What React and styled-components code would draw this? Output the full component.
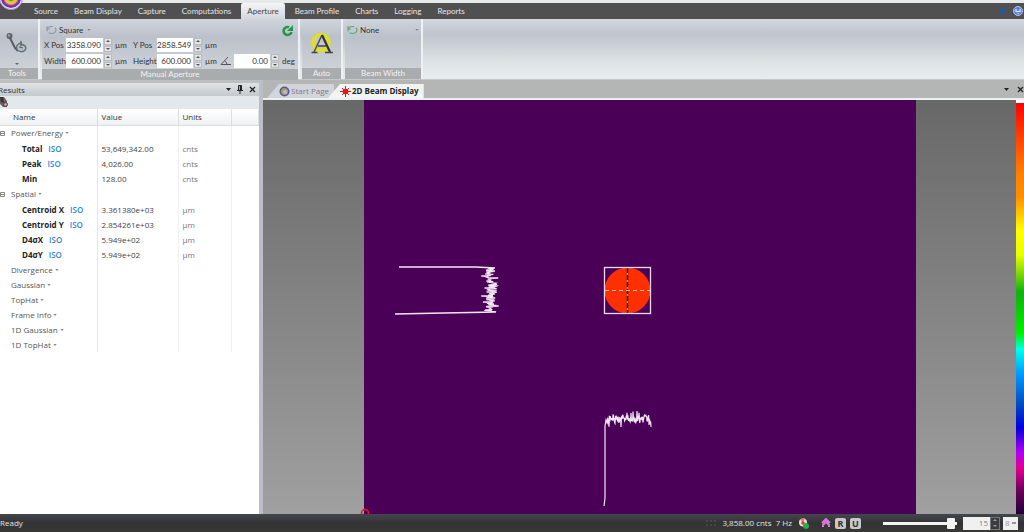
import React, { useState } from "react";
import styled, { createGlobalStyle } from "styled-components";

const TABS = [
  "Source",
  "Beam Display",
  "Capture",
  "Computations",
  "Aperture",
  "Beam Profile",
  "Charts",
  "Logging",
  "Reports",
];

const RESULTS = [
  {
    name: "Power/Energy",
    rows: [
      { name: "Total", iso: true, value: "53,649,342.00", units: "cnts" },
      { name: "Peak", iso: true, value: "4,026.00", units: "cnts" },
      { name: "Min", value: "128.00", units: "cnts" },
    ],
  },
  {
    name: "Spatial",
    rows: [
      { name: "Centroid X", iso: true, value: "3.361380e+03", units: "µm" },
      { name: "Centroid Y", iso: true, value: "2.854261e+03", units: "µm" },
      { name: "D4σX", iso: true, value: "5.949e+02", units: "µm" },
      { name: "D4σY", iso: true, value: "5.949e+02", units: "µm" },
    ],
  },
  { name: "Divergence" },
  { name: "Gaussian" },
  { name: "TopHat" },
  { name: "Frame Info" },
  { name: "1D Gaussian" },
  { name: "1D TopHat" },
];

// repeatable noise in the range -1..1
const noise = (i) => {
  const n = Math.sin(i * 12.9898 + 4.1) * 43758.5453;
  return (n - Math.floor(n)) * 2 - 1;
};

const verticalTrace = () => {
  const points = ["35,167", "112,167", "131,168"];
  for (let i = 0; i < 110; i++) {
    // widest around the middle of the beam
    const middle = Math.abs(i - 48) < 14 ? 2 : 0;
    const reach = i % 5 === 0 ? 9 : 5;
    points.push(`${(126 + middle + noise(i) * reach).toFixed(1)},${(168 + i * 0.4).toFixed(1)}`);
  }
  points.push("132,212", "80,213", "31,214");
  return points.join(" ");
};

const horizontalTrace = () => {
  const points = ["240,406", "241,398", "241,326", "242,320"];
  for (let i = 0; i < 110; i++) {
    const reach = i % 5 === 0 ? 8 : 4;
    points.push(`${(243 + i * 0.4).toFixed(1)},${(319 + noise(i + 90) * reach).toFixed(1)}`);
  }
  points.push("287,327");
  return points.join(" ");
};

const NumberField = ({ id, label, icon, value, unit }) => {
  const [text, setText] = useState(value);
  const step = (by) => setText((parseFloat(text) + by).toFixed(value.split(".")[1].length));

  return (
    <>
      <FieldLabel htmlFor={id} aria-label={label}>
        {icon || label}
      </FieldLabel>
      <FieldInput id={id} value={text} onChange={(e) => setText(e.target.value)} />
      <Spinner>
        <SpinButton aria-label={`Increase ${label}`} onClick={() => step(1)}>
          <SpinArrow up />
        </SpinButton>
        <SpinButton aria-label={`Decrease ${label}`} onClick={() => step(-1)}>
          <SpinArrow />
        </SpinButton>
      </Spinner>
      <Unit>{unit}</Unit>
    </>
  );
};

const Arrow = () => (
  <svg width="5" height="3" viewBox="0 0 5 3" aria-hidden="true">
    <path d="M0 0 2.5 3 5 0z" fill="currentColor" />
  </svg>
);

const SpinArrow = ({ up }) => (
  <svg width="4" height="2" viewBox="0 0 4 2" aria-hidden="true">
    <path d={up ? "M0 2 2 0 4 2z" : "M0 0 2 2 4 0z"} fill="currentColor" />
  </svg>
);

const CloseIcon = () => (
  <svg width="7" height="7" viewBox="0 0 7 7" aria-hidden="true">
    <path d="M1 1l5 5M6 1L1 6" stroke="#222" strokeWidth="1.3" />
  </svg>
);

const AngleIcon = () => (
  <svg width="11" height="10" viewBox="0 0 11 10" aria-hidden="true">
    <path d="M8 1 1 8.500h10M4.500 5q2.500 1 2.500 3.500" fill="none" stroke="#555" />
  </svg>
);

const ToolsIcon = () => (
  <svg width="22" height="22" viewBox="0 0 22 22" aria-hidden="true">
    <circle cx="3.500" cy="4" r="3" fill="#5d646b" />
    <circle cx="3" cy="3.500" r="1.200" fill="#9aa2aa" />
    <path d="M4 6l5 10 3 3" fill="none" stroke="#555c63" strokeWidth="2" />
    <path d="M12 18.500q-3-3 0-6l3-2v3l2-1q4 2 2.500 5-3 4-7.500 1z" fill="#b9c0c6" stroke="#687078" strokeWidth="1.400" />
    <path d="M15 9v4M13 15l4 1" stroke="#5d646b" strokeWidth="1.200" />
  </svg>
);

const AutoIcon = () => (
  <svg width="24" height="24" viewBox="0 0 24 24" aria-hidden="true">
    <circle cx="11" cy="10.500" r="8" fill="#c3c6cc" stroke="#e2e01e" strokeWidth="3.500" />
    <path d="M4 20 12 3" stroke="#444" strokeWidth="1.400" />
    <path d="M12 3l8 17" stroke="#333" strokeWidth="2.200" />
    <path d="M8 14h8M1.500 20.500h6M15 20.500h8" stroke="#444" strokeWidth="1.400" />
  </svg>
);

const RingIcon = ({ color }) => (
  <svg width="11" height="10" viewBox="0 0 11 10" aria-hidden="true">
    <ellipse cx="5.500" cy="5" rx="4.500" ry="3.500" fill="none" stroke={color} strokeWidth="1.200" strokeDasharray="9 2" />
    <path d="M1 1v3h3" fill="none" stroke={color} />
  </svg>
);

const RefreshIcon = () => (
  <svg width="12" height="12" viewBox="0 0 12 12" aria-hidden="true">
    <path d="M9.500 7A4 4 0 1 1 7 2.200" fill="none" stroke="#23984a" strokeWidth="2.600" />
    <path d="M11 0v6H5z" fill="#23984a" />
  </svg>
);

const PinIcon = () => (
  <svg width="6" height="9" viewBox="0 0 6 9" aria-hidden="true">
    <path d="M1.500 0.500h3v5h-3zM0 5.500h6M3 5.500V9" fill="none" stroke="#222" />
    <path d="M3.500 0v5" stroke="#222" strokeWidth="1.500" />
  </svg>
);

const BeamIcon = () => (
  <svg width="11" height="11" viewBox="0 0 11 11" aria-hidden="true">
    <path d="M5.500 0v11M0 5.500h11M2 2l7 7M9 2 2 9" stroke="#e8141c" />
    <circle cx="5.500" cy="5.500" r="2.800" fill="#e8141c" />
  </svg>
);

const StartIcon = () => (
  <svg width="11" height="11" viewBox="0 0 11 11" aria-hidden="true">
    <circle cx="5.500" cy="5.500" r="5" fill="#5a55a8" />
    <circle cx="5.500" cy="5.500" r="3.500" fill="#a5a34a" />
    <circle cx="6" cy="6" r="2" fill="#b9b9d8" />
  </svg>
);

const RecordIcon = () => (
  <svg width="10" height="11" viewBox="0 0 10 11" aria-hidden="true">
    <path d="M1 0h4l3 4v6H4L1 7z" fill="#6c6266" />
    <path d="M1 0h3l1 6-3-1z" fill="#3a3235" />
    <circle cx="6.500" cy="7.500" r="2" fill="#c09aa0" stroke="#4c4044" />
  </svg>
);

const AppLogo = () => (
  <svg width="24" height="24" viewBox="0 0 24 24" aria-hidden="true">
    <circle cx="12" cy="12" r="11.500" fill="#ece6f4" stroke="#a58cc0" />
    <circle cx="12" cy="12" r="10" fill="#6a35b8" />
    <circle cx="12" cy="12" r="7.500" fill="#e05a9c" />
    <circle cx="12" cy="12" r="6.500" fill="#f2c22c" />
    <circle cx="12" cy="12" r="4.500" fill="#9adf4a" />
    <circle cx="12" cy="12" r="3" fill="#f0502c" />
  </svg>
);

const BeamView = () => (
  <Sensor viewBox="0 0 552 414" role="img" aria-label="2D beam display">
    <rect width="552" height="414" fill="#4b0058" />
    <polyline points={verticalTrace()} fill="none" stroke="#f3e8f5" strokeWidth="1.300" />
    <polyline points={horizontalTrace()} fill="none" stroke="#f3e8f5" strokeWidth="1.200" />
    <circle cx="263.500" cy="190.500" r="23" fill="#ff3000" />
    <path d="M263.500 168v45" stroke="#d9a090" />
    <path d="M263.500 168v45" stroke="#151515" strokeWidth="1.500" strokeDasharray="5 2" />
    <path d="M241 190.500h46" stroke="#e5c4b4" strokeDasharray="4 3" />
    <rect x="240.500" y="167.500" width="46" height="46" fill="none" stroke="#eadcee" strokeWidth="1.300" />
    <circle cx="1" cy="413" r="3.500" fill="none" stroke="#e01830" strokeWidth="1.500" />
  </Sensor>
);

const ResultsPanel = () => (
  <Panel>
    <PanelTitle>
      <span>Results</span>
      <PanelActions>
        <IconButton aria-label="Panel menu">
          <Arrow />
        </IconButton>
        <IconButton aria-label="Pin panel">
          <PinIcon />
        </IconButton>
        <IconButton aria-label="Close panel">
          <CloseIcon />
        </IconButton>
      </PanelActions>
    </PanelTitle>
    <PanelToolbar>
      <IconButton aria-label="Log results">
        <RecordIcon />
      </IconButton>
    </PanelToolbar>
    <ResultsTable>
      <colgroup>
        <NameCol />
        <ValueCol />
        <UnitsCol />
        <col />
      </colgroup>
      <thead>
        <tr>
          <HeadCell $first>Name</HeadCell>
          <HeadCell>Value</HeadCell>
          <HeadCell>Units</HeadCell>
          <HeadCell />
        </tr>
      </thead>
      {RESULTS.map((group) => (
        <tbody key={group.name}>
          <GroupRow $open={!!group.rows}>
            <GroupCell scope="rowgroup">
              <GroupButton>
                <Expander>
                  {group.rows && (
                    <svg width="5" height="5" viewBox="0 0 5 5" aria-hidden="true">
                      <path d="M0.500 0.500h4v4h-4zM1 2.500h3" fill="none" stroke="#888" />
                    </svg>
                  )}
                </Expander>
                {group.name}
                <SmallArrow>
                  <Arrow />
                </SmallArrow>
              </GroupButton>
            </GroupCell>
            <Cell />
            <Cell />
            <Cell />
          </GroupRow>
          {(group.rows || []).map((row) => (
            <ItemRow key={row.name}>
              <NameCell scope="row">
                {row.name}
                {row.iso && <Iso>ISO</Iso>}
              </NameCell>
              <Cell>{row.value}</Cell>
              <Cell $dim>{row.units}</Cell>
              <Cell />
            </ItemRow>
          ))}
        </tbody>
      ))}
    </ResultsTable>
  </Panel>
);

const App = () => {
  const [tab, setTab] = useState("Aperture");
  const [frame, setFrame] = useState(97);

  return (
    <Shell>
      <GlobalStyle />
      <Logo>
        <AppLogo />
      </Logo>
      <TitleStrip />
      <MenuBar>
        {TABS.map((name) => (
          <MenuTab key={name} $active={name === tab} onClick={() => setTab(name)}>
            {name}
          </MenuTab>
        ))}
        <MenuHelp>
          <svg width="8" height="10" viewBox="0 0 8 10" aria-hidden="true">
            <path d="M7 0v9L4 7 1 8V5l-1-1 3-1z" fill="#2458a0" />
          </svg>
          <svg width="10" height="10" viewBox="0 0 10 10" aria-hidden="true">
            <circle cx="5" cy="5" r="4.500" fill="#5d82dc" stroke="#b4c4ee" />
            <path d="M3 3v2.500h4V3M5 7v1" fill="none" stroke="#e4ecff" strokeWidth="1.200" />
          </svg>
        </MenuHelp>
      </MenuBar>

      <Ribbon>
        <Group $width={44}>
          <GroupBody $center>
            <BigButton aria-label="Tools">
              <ToolsIcon />
              <SpinArrow />
            </BigButton>
          </GroupBody>
          <GroupLabel>Tools</GroupLabel>
        </Group>
        <Group $width={258}>
          <GroupBody>
            <ShapeRow>
              <DropButton>
                <RingIcon color="#8d99a3" />
                Square
                <SmallArrow>
                  <Arrow />
                </SmallArrow>
              </DropButton>
              <IconButton aria-label="Reset aperture">
                <RefreshIcon />
              </IconButton>
            </ShapeRow>
            <FieldGrid>
              <NumberField id="xpos" label="X Pos" value="3358.090" unit="µm" />
              <NumberField id="ypos" label="Y Pos" value="2858.549" unit="µm" />
              <FieldBreak />
              <NumberField id="width" label="Width" value="600.000" unit="µm" />
              <NumberField id="height" label="Height" value="600.000" unit="µm" />
              <NumberField id="angle" label="Angle" icon={<AngleIcon />} value="0.00" unit="deg" />
            </FieldGrid>
          </GroupBody>
          <GroupLabel>Manual Aperture</GroupLabel>
        </Group>
        <Group $width={41}>
          <GroupBody $center>
            <BigButton aria-label="Auto aperture">
              <AutoIcon />
            </BigButton>
          </GroupBody>
          <GroupLabel>Auto</GroupLabel>
        </Group>
        <Group $width={78}>
          <GroupBody>
            <DropButton $wide>
              <RingIcon color="#55a874" />
              None
              <SmallArrow>
                <Arrow />
              </SmallArrow>
            </DropButton>
          </GroupBody>
          <GroupLabel>Beam Width</GroupLabel>
        </Group>
      </Ribbon>

      <Workspace>
        <ResultsPanel />
        <Document>
          <DocTabs>
            <DocTab>
              <StartIcon />
              Start Page
            </DocTab>
            <DocTab $active>
              <BeamIcon />
              2D Beam Display
            </DocTab>
            <DocActions>
              <IconButton aria-label="Window list">
                <Arrow />
              </IconButton>
              <IconButton aria-label="Close document">
                <CloseIcon />
              </IconButton>
            </DocActions>
          </DocTabs>
          <DocBody>
            <Stage>
              <BeamView />
            </Stage>
            <Palette />
          </DocBody>
        </Document>
      </Workspace>

      <StatusBar>
        <span>Ready</span>
        <StatusItems>
          <svg width="10" height="6" viewBox="0 0 10 6" aria-hidden="true">
            <path d="M0 1h10M0 5h10" stroke="#5a5a5a" strokeDasharray="2 2" />
          </svg>
          <span>3,858.00 cnts&nbsp; 7 Hz</span>
          <svg width="11" height="11" viewBox="0 0 11 11" aria-hidden="true">
            <circle cx="5" cy="4.500" r="4" fill="#e8e4dc" />
            <path d="M5 5 7 0 2 1z" fill="#e07a70" />
            <circle cx="5" cy="5" r="1.800" fill="#d84030" />
            <circle cx="8" cy="8" r="3" fill="#2ea84c" />
          </svg>
          <StatusToggles>
            <svg width="10" height="10" viewBox="0 0 10 10" aria-hidden="true">
              <path d="M1 5l4-4 4 4M2 9V7l3-3 3 3v2" fill="none" stroke="#d477d8" strokeWidth="2" />
            </svg>
            <ToggleButton>R</ToggleButton>
            <ToggleButton>U</ToggleButton>
          </StatusToggles>
          <Slider
            type="range"
            aria-label="Frame"
            value={frame}
            onChange={(e) => setFrame(e.target.value)}
          />
          <StatusSpin>
            <StatusInput aria-label="Frame number" defaultValue="15" />
            <DarkSpinner>
              <SpinButton $dark aria-label="Next frame">
                <SpinArrow up />
              </SpinButton>
              <SpinButton $dark aria-label="Previous frame">
                <SpinArrow />
              </SpinButton>
            </DarkSpinner>
          </StatusSpin>
          <StatusSelect aria-label="Playback" defaultValue="8">
            <option>8</option>
            <option>16</option>
          </StatusSelect>
        </StatusItems>
      </StatusBar>
    </Shell>
  );
};

const GlobalStyle = createGlobalStyle`
  * {
    box-sizing: border-box;
  }
  body {
    margin: 0;
    overflow: hidden;
    font-family: "Open Sans", "Noto Sans", sans-serif;
    font-size: 8px;
    line-height: 12px;
    color: #333;
  }
  button, input, select {
    margin: 0;
    padding: 0;
    border: 0;
    background: none;
    font: inherit;
    color: inherit;
  }
  svg {
    display: block;
    flex: none;
  }
`;

/* the window hangs slightly over the left edge of the screen */
const Shell = styled.div`
  position: relative;
  display: flex;
  flex-direction: column;
  height: 100vh;
  margin-left: -4px;
`;

const Logo = styled.div`
  position: absolute;
  top: -14px;
  left: 3px;
`;

const TitleStrip = styled.div`
  height: 3px;
  background: #e8eaea;
`;

const MenuBar = styled.div`
  display: flex;
  align-items: stretch;
  gap: 4px;
  height: 16px;
  padding-left: 32px;
  font-family: Lato, "Open Sans", sans-serif;
  background: #505050;
`;

const MenuTab = styled.button`
  padding: 0 6px;
  border-radius: 2px 2px 0 0;
  color: ${(p) => (p.$active ? "#444" : "#e6e6e6")};
  background: ${(p) => (p.$active ? "linear-gradient(#f4f5f6, #d3d7de)" : "none")};
`;

const MenuHelp = styled.div`
  display: flex;
  align-items: center;
  gap: 6px;
  margin-left: auto;
  padding-right: 1px;
`;

const Ribbon = styled.div`
  display: flex;
  gap: 2px;
  height: 61px;
  font-family: Lato, "Open Sans", sans-serif;
  background: linear-gradient(#d3d7df, #c0c4cd 25%, #dfe5e7 75%, #e8eeee);
  border-bottom: 1px solid #c4c8c8;
`;

const Group = styled.div`
  display: flex;
  flex-direction: column;
  flex: none;
  width: ${(p) => p.$width}px;
  border-right: 2px solid #eef0f2;
  background: linear-gradient(#d0d4dc, #bcc0ca 30%, #d3d8dc);
`;

const GroupBody = styled.div`
  display: flex;
  flex-direction: column;
  flex: 1;
  align-items: ${(p) => (p.$center ? "center" : "stretch")};
  padding: 5px 2px 0;
`;

const GroupLabel = styled.div`
  height: 11px;
  line-height: 11px;
  text-align: center;
  color: #f2f2f2;
  background: #a9acae;
`;

const BigButton = styled.button`
  display: flex;
  flex-direction: column;
  align-items: center;
  gap: 9px;
  padding-top: 8px;
  color: #666;
`;

const ShapeRow = styled.div`
  display: flex;
  justify-content: space-between;
  height: 13px;
  padding: 0 2px;
`;

const DropButton = styled.button`
  display: flex;
  align-items: center;
  gap: 2px;
  width: ${(p) => (p.$wide ? "100%" : "auto")};
  height: 12px;

  > :last-child {
    margin-left: ${(p) => (p.$wide ? "auto" : "2px")};
  }
`;

const SmallArrow = styled.span`
  display: inline-flex;
  margin-left: 2px;
  color: #888;

  svg {
    width: 4px;
    height: 2px;
  }
`;

const FieldGrid = styled.div`
  display: grid;
  grid-template-columns: 22px 37px 9px 21px 24px 36px 9px 23px 9px 36px 9px 17px;
  grid-auto-rows: 16px;
  align-items: center;
`;

const FieldBreak = styled.span`
  grid-column: span 4;
`;

const FieldLabel = styled.label`
  white-space: nowrap;
  justify-self: start;
  svg {
    margin-left: -5px;
  }
`;

const FieldInput = styled.input`
  width: 100%;
  height: 14px;
  padding-right: 2px;
  text-align: right;
  background: #fff;
`;

const Spinner = styled.div`
  display: flex;
  flex-direction: column;
  gap: 1px;
  height: 14px;
  padding-left: 1px;
`;

const SpinButton = styled.button`
  display: flex;
  flex: 1;
  align-items: center;
  justify-content: center;
  border: ${(p) => (p.$dark ? "0" : "1px solid #b8bcc0")};
  background: ${(p) => (p.$dark ? "#3c3c3e" : "#e2e4e6")};
  color: ${(p) => (p.$dark ? "#999" : "#555")};
`;

const Unit = styled.span`
  padding-left: 3px;
`;

const IconButton = styled.button`
  display: flex;
  align-items: center;
  color: #222;
`;

const Workspace = styled.div`
  display: flex;
  flex: 1;
  min-height: 0;
`;

const Panel = styled.div`
  flex: none;
  width: 267px;
  padding-top: 3px;
  border-right: 4px solid #bcbdc6;
  background: linear-gradient(#bcbfc0 3px, #fff 3px);
`;

const PanelTitle = styled.div`
  display: flex;
  align-items: center;
  justify-content: space-between;
  height: 13px;
  padding: 0 3px 0 2px;
  background: linear-gradient(#dfe3e6, #c4c9cd);
`;

const PanelActions = styled.div`
  display: flex;
  gap: 6px;
`;

const PanelToolbar = styled.div`
  display: flex;
  height: 13px;
  padding-left: 3px;
  background: #e3e8ec;
`;

const ResultsTable = styled.table`
  width: 100%;
  table-layout: fixed;
  border-collapse: collapse;
  background: #fff;

  th, td {
    padding: 0 0 0 4px;
    text-align: left;
    white-space: nowrap;
  }
`;

const NameCol = styled.col`
  width: 101px;
`;

const ValueCol = styled.col`
  width: 81px;
`;

const UnitsCol = styled.col`
  width: 53px;
`;

const HeadCell = styled.th`
  height: 16px;
  font-weight: normal;
  border-right: 1px solid #dcdfe2;
  border-bottom: 1px solid #dcdfe2;
  background: linear-gradient(#fff, #f0f1f3);

  && {
    padding-left: ${(p) => (p.$first ? 17 : 4)}px;
  }
`;

const GroupRow = styled.tr`
  height: ${(p) => (p.$open ? 16 : 15)}px;
  color: #555;
`;

const ItemRow = styled.tr`
  height: 15px;
`;

const Cell = styled.td`
  border-right: 1px solid #f0f0f2;
  color: ${(p) => (p.$dim ? "#777" : "#444")};

  &:last-child {
    border-right: 0;
  }
`;

const GroupCell = styled.th`
  font-weight: normal;
  border-right: 1px solid #e8e8ec;
`;

const GroupButton = styled.button`
  display: flex;
  align-items: center;
`;

const Expander = styled.span`
  width: 11px;
`;

const NameCell = styled.th`
  font-weight: bold;
  color: #222;
  border-right: 1px solid #e8e8ec;

  && {
    padding-left: 26px;
  }
`;

const Iso = styled.span`
  margin-left: 6px;
  font-weight: 600;
  color: #2f86d4;
`;

const Document = styled.div`
  display: flex;
  flex-direction: column;
  flex: 1;
  min-width: 0;
`;

const DocTabs = styled.div`
  display: flex;
  align-items: flex-end;
  height: 20px;
  padding-left: 4px;
  background: #b4b6b6;
  border-bottom: 2px solid #eef0f0;
`;

const DocTab = styled.button`
  display: flex;
  align-items: center;
  gap: 1px;
  height: 14px;
  padding: 0 5px 0 12px;
  font-weight: ${(p) => (p.$active ? "bold" : "normal")};
  color: ${(p) => (p.$active ? "#222" : "#777b90")};
  background: ${(p) => (p.$active ? "#f2f4f4" : "#d3d5da")};
  clip-path: polygon(12px 0, 100% 0, 100% 100%, 0 100%);

  & + & {
    margin-left: -6px;
  }
`;

const DocActions = styled.div`
  display: flex;
  align-items: center;
  align-self: stretch;
  gap: 8px;
  margin-left: auto;
`;

const DocBody = styled.div`
  display: flex;
  flex: 1;
  min-height: 0;
`;

const Stage = styled.div`
  display: flex;
  flex: 1;
  justify-content: center;
  min-width: 0;
  background: linear-gradient(#686868, #a0a0a0);
`;

const Sensor = styled.svg`
  height: 100%;
  aspect-ratio: 4 / 3;
  overflow: visible;
`;

const Palette = styled.div`
  flex: none;
  width: 8px;
  border-top: 3px solid #fff;
  background: linear-gradient(
    #ff0000,
    #ff3000 6%,
    #ff8000 17%,
    #ff9000 23%,
    #ffff00 31%,
    #e8ff00 37%,
    #10b010 46%,
    #00f000 56%,
    #00ffe8 60%,
    #0098ff 66%,
    #0050c0 73%,
    #0000e0 79%,
    #b000f0 85%,
    #e00090 89%,
    #70005c 94%,
    #200038
  );
`;

const StatusBar = styled.footer`
  position: relative;
  display: flex;
  align-items: center;
  justify-content: space-between;
  height: 18px;
  padding: 0 6px 0 4px;
  color: #e4e4e4;
  background: linear-gradient(#45454e, #333335 50%, #383836);
`;

const StatusItems = styled.div`
  display: flex;
  align-items: center;
  gap: 6px;
`;

const StatusToggles = styled.div`
  display: flex;
  align-items: center;
  gap: 4px;
  margin: 0 16px 0 6px;
`;

const ToggleButton = styled.button`
  width: 11px;
  height: 11px;
  border-radius: 2px;
  font-size: 9px;
  font-weight: bold;
  line-height: 11px;
  color: #333;
  background: #c8c8c8;
`;

const Slider = styled.input`
  appearance: none;
  width: 74px;
  height: 12px;

  &::-webkit-slider-runnable-track {
    height: 3px;
    background: #f4f4f4;
  }
  &::-webkit-slider-thumb {
    appearance: none;
    width: 8px;
    height: 11px;
    margin-top: -4px;
    border-radius: 1px;
    background: #f4f4f4;
  }
`;

const StatusSpin = styled.div`
  display: flex;
  height: 13px;
`;

const StatusInput = styled.input`
  width: 27px;
  padding-right: 2px;
  text-align: right;
  color: #888;
  background: #f0f0f0;
`;

const DarkSpinner = styled.div`
  display: flex;
  flex-direction: column;
  width: 10px;
  border: 1px solid #777;
`;

const StatusSelect = styled.select`
  width: 15px;
  height: 13px;
  color: #999;
  background: #f0f0f0;
  appearance: none;
  padding-left: 2px;
  margin-left: -3px;
  background-image: linear-gradient(#999, #999);
  background-size: 4px 2px;
  background-position: 9px 5px;
  background-repeat: no-repeat;
`;

export default App;
